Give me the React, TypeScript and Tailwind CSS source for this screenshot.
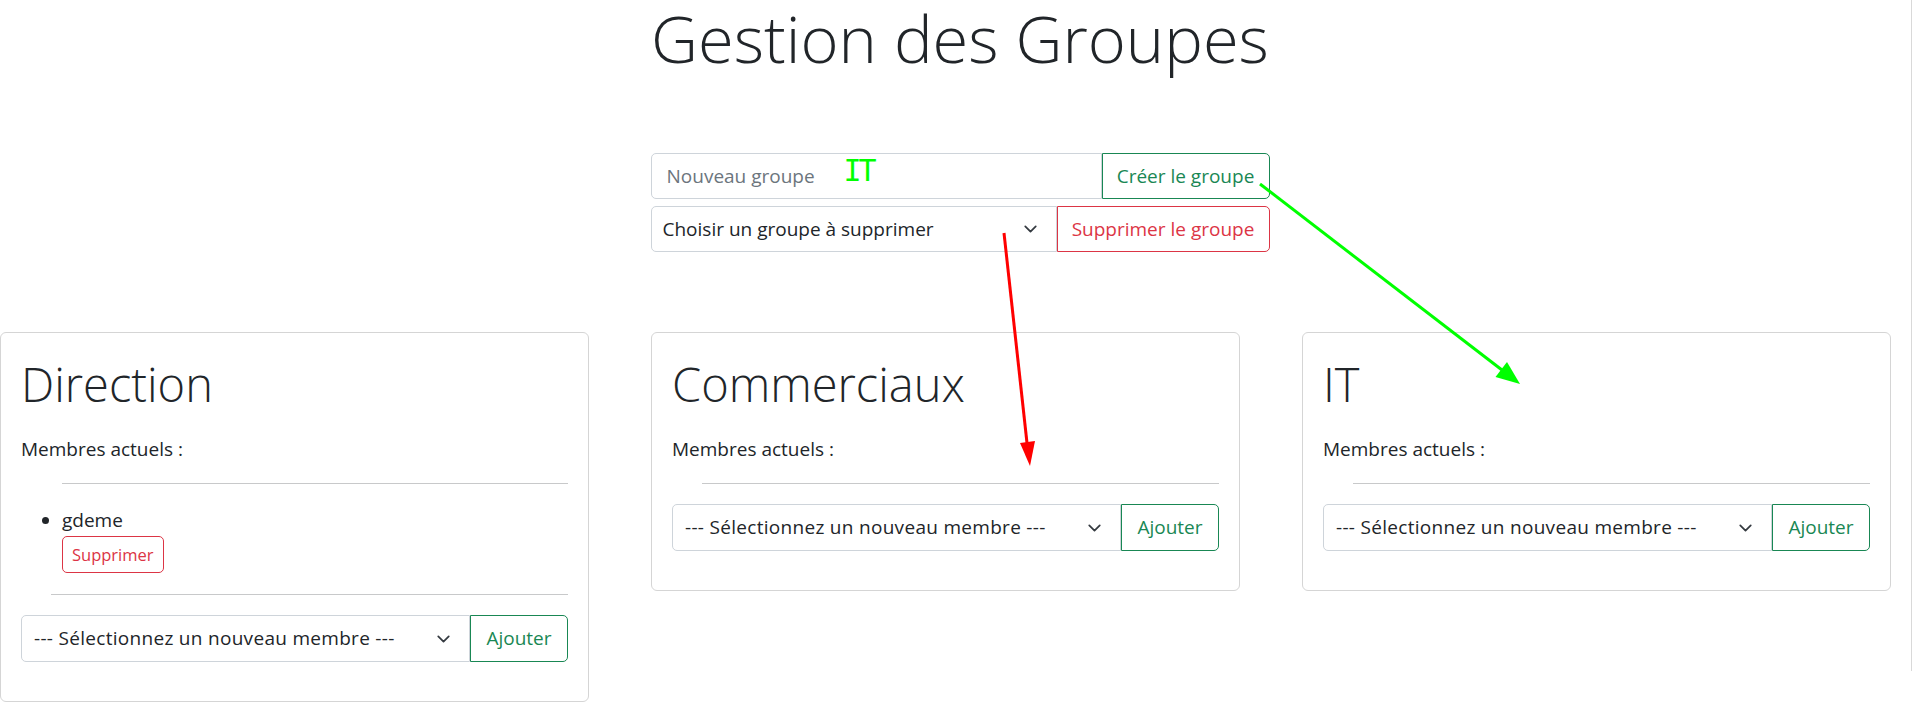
import React from "react";

const Chevron = () => (
  <svg width="19" height="14" viewBox="0 0 16 16" className="shrink-0">
    <path d="m2 5 6 6 6-6" fill="none" stroke="#343a40" strokeWidth="2" strokeLinecap="round" strokeLinejoin="round" />
  </svg>
);

const MemberSelect = () => (
  <div className="flex h-[47px] text-[19px]">
    <div className="flex flex-1 items-center justify-between rounded-l-[5px] border border-[#ced4da] pl-[12px] pr-[16px]">
      <span className="tracking-[0.3px]">--- Sélectionnez un nouveau membre ---</span>
      <Chevron />
    </div>
    <button className="w-[98px] rounded-r-[5px] border border-[#198754] text-[#198754]">Ajouter</button>
  </div>
);

const Card = ({ title, members }: { title: string; members: string[] }) => (
  <div className="w-[589px] shrink-0 rounded-[6px] border border-[#d5d5d5] px-[20px] pt-[19px] pb-[39px]">
    <h2 className="text-[47px] font-light leading-[64px]">{title}</h2>
    <p className="mt-[19px] text-[19px] leading-[28px]">Membres actuels :</p>
    {members.length > 0 ? (
      <>
        <hr className="mt-[20px] ml-[41px] border-t border-[#c8c9ca]" />
        <ul className="mt-[22px] list-disc pl-[41px]">
          {members.map((m) => (
            <li key={m} className="text-[19px] leading-[29px]">
              {m}
              <div>
                <button className="mt-[1px] h-[37px] rounded-[5px] border border-[#dc3545] px-[9px] text-[16.5px] text-[#dc3545]">
                  Supprimer
                </button>
              </div>
            </li>
          ))}
        </ul>
        <hr className="mt-[21px] ml-[30px] border-t border-[#c8c9ca]" />
      </>
    ) : (
      <hr className="mt-[20px] ml-[30px] border-t border-[#c8c9ca]" />
    )}
    <div className="mt-[20px]">
      <MemberSelect />
    </div>
  </div>
);

export default function App() {
  return (
    <div
      className="relative h-[719px] w-full overflow-hidden bg-white text-[#212529]"
      style={{ fontFamily: '"Open Sans", "Noto Sans", sans-serif' }}
    >
      <h1 className="text-center text-[65px] font-light leading-[76px]">Gestion des Groupes</h1>

      <div className="mx-auto mt-[77px] flex w-[619px] flex-col gap-[7px] text-[19px]">
        <div className="flex h-[46px]">
          <div className="relative flex flex-1 items-center rounded-l-[5px] border border-[#ced4da] pl-[15px] text-[#6c757d]">
            <span>Nouveau groupe</span>
            <span
              className="absolute left-[192px] top-0 text-[30px] leading-[34px] tracking-[-3px] text-[#00ff00]"
              style={{ fontFamily: '"DejaVu Sans Mono", monospace' }}
            >
              IT
            </span>
          </div>
          <button className="w-[168px] rounded-r-[5px] border border-[#198754] text-[#198754]">Créer le groupe</button>
        </div>
        <div className="flex h-[46px]">
          <div className="flex flex-1 items-center justify-between rounded-l-[5px] border border-[#ced4da] pl-[11px] pr-[16px]">
            <span>Choisir un groupe à supprimer</span>
            <Chevron />
          </div>
          <button className="w-[213px] rounded-r-[5px] border border-[#dc3545] text-[#dc3545]">Supprimer le groupe</button>
        </div>
      </div>

      <div className="mt-[80px] flex items-start gap-[62px]">
        <Card title="Direction" members={["gdeme"]} />
        <Card title="Commerciaux" members={[]} />
        <Card title="IT" members={[]} />
      </div>

      <div className="absolute left-[1911px] top-0 h-[671px] w-px bg-[#d9d9d9]" />

      <svg className="pointer-events-none absolute left-0 top-0" width="1920" height="719">
        <line x1="1260" y1="184" x2="1502" y2="370" stroke="#00ff00" strokeWidth="3" />
        <polygon points="1520,384 1495.5,377 1507,362" fill="#00ff00" />
        <line x1="1004" y1="233" x2="1027" y2="443" stroke="#ff0000" strokeWidth="3" />
        <polygon points="1030,466 1020,443 1035,441" fill="#ff0000" />
      </svg>
    </div>
  );
}
